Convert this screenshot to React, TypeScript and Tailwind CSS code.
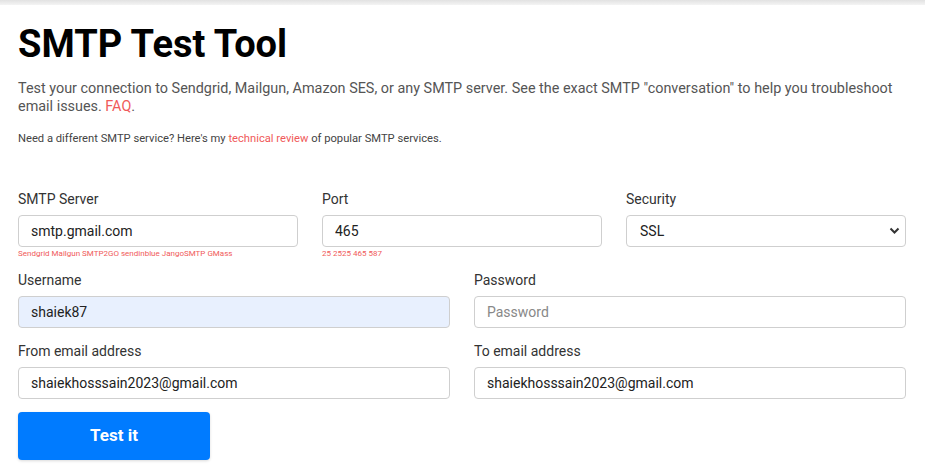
import { useState } from "react";

const Field = ({
  label,
  value,
  placeholder,
  hint,
  autofill,
}: {
  label: string;
  value?: string;
  placeholder?: string;
  hint?: string;
  autofill?: boolean;
}) => (
  <div className="flex flex-col">
    <label className="text-[14px] leading-[18px] text-[#333] mb-[7px]">{label}</label>
    <input
      defaultValue={value}
      placeholder={placeholder}
      className={`h-[32px] w-full rounded-[4px] border border-[#cfcfcf] px-[12px] text-[14px] text-[#222] placeholder-[#888] outline-none ${
        autofill ? "bg-[#e8f0fe]" : "bg-white"
      }`}
    />
    {hint && <div className="text-[8px] leading-[12px] text-[#f05a5a] mt-[1px]">{hint}</div>}
  </div>
);

const App = () => {
  const [security, setSecurity] = useState("SSL");

  return (
    <div className="min-h-screen bg-white font-['Roboto',sans-serif]">
      {/* header shadow strip */}
      <div className="h-[5px] bg-gradient-to-b from-[#e2e2e2] to-[#f4f4f4]"></div>

      <div className="px-[18px] pr-[19px]">
        <h1 className="text-[38px] leading-[46px] font-bold text-black mt-[16px]">SMTP Test Tool</h1>
        <p className="text-[14.4px] leading-[18px] text-[#555] mt-[13px]">
          Test your connection to Sendgrid, Mailgun, Amazon SES, or any SMTP server. See the exact SMTP
          "conversation" to help you troubleshoot email issues. <a className="text-[#f05a5a]">FAQ</a>.
        </p>
        <p className="text-[11.2px] leading-[14px] text-[#444] mt-[16px]">
          Need a different SMTP service? Here's my <a className="text-[#f05a5a]">technical review</a> of
          popular SMTP services.
        </p>

        <div className="grid grid-cols-3 gap-x-[24px] mt-[44px]">
          <Field
            label="SMTP Server"
            value="smtp.gmail.com"
            hint="Sendgrid Mailgun SMTP2GO sendinblue JangoSMTP GMass"
          />
          <Field label="Port" value="465" hint="25 2525 465 587" />
          <div className="flex flex-col">
            <label className="text-[14px] leading-[18px] text-[#333] mb-[7px]">Security</label>
            <div className="relative">
              <select
                value={security}
                onChange={(e) => setSecurity(e.target.value)}
                className="h-[32px] w-full appearance-none rounded-[4px] border border-[#cfcfcf] bg-white px-[13px] text-[14px] text-[#222] outline-none"
              >
                <option>SSL</option>
                <option>TLS</option>
                <option>None</option>
              </select>
              <svg
                className="absolute right-[6px] top-[11px] pointer-events-none"
                width="11"
                height="9"
                viewBox="0 0 11 9"
              >
                <path d="M1.5 2.5 L5.5 6.5 L9.5 2.5" fill="none" stroke="#333" strokeWidth="2" />
              </svg>
            </div>
          </div>
        </div>

        <div className="grid grid-cols-2 gap-x-[24px] gap-y-[14px] mt-[11px]">
          <Field label="Username" value="shaiek87" autofill />
          <Field label="Password" placeholder="Password" />
          <Field label="From email address" value="shaiekhosssain2023@gmail.com" />
          <Field label="To email address" value="shaiekhosssain2023@gmail.com" />
        </div>

        <button
          type="button"
          className="mt-[13px] w-[192px] h-[48px] rounded-[4px] bg-[#007bff] text-white text-[17px] font-bold shadow-[0_1px_3px_rgba(0,0,0,0.15)]"
        >
          Test it
        </button>
      </div>
    </div>
  );
};

export default App;
